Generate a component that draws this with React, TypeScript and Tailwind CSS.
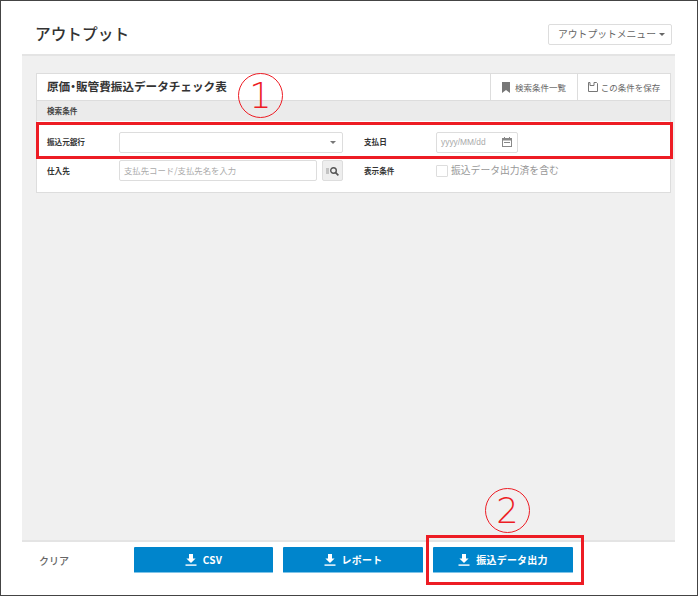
const font = { fontFamily: '"Noto Sans CJK JP", "Liberation Sans", sans-serif' };
const numeral = { fontFamily: '"DejaVu Sans", sans-serif' };

function DownloadIcon() {
  return (
    <svg width="12" height="12" viewBox="0 0 12 12" fill="currentColor" className="shrink-0">
      <path d="M4 0h4v4.5h2.6L6 9 1.4 4.5H4z" />
      <rect x="0.5" y="10.4" width="11" height="1.4" />
    </svg>
  );
}

function ActionButton({ label, w }: { label: string; w: string }) {
  return (
    <button className={`${w} h-[26px] flex items-center justify-center gap-[6px] bg-[#0085cc] rounded-[1px] border-b border-[#7fc4e8] text-white text-[10px] font-bold tracking-[0.2px]`}>
      <DownloadIcon />
      {label}
    </button>
  );
}

function FieldLabel({ children, w }: { children: string; w: string }) {
  return <div className={`${w} shrink-0 pl-[10px] text-[7.6px] font-bold text-[#333]`}>{children}</div>;
}

export default function App() {
  return (
    <div className="bg-white w-[700px] h-[598px]" style={font}>
      <div className="relative w-[698px] h-[596px] border border-[#444] flex flex-col">
        {/* Header */}
        <div className="h-[53px] shrink-0 flex items-center justify-between pl-[34px] pr-[25px] pt-[12px]">
          <h1 className="text-[15.7px] font-medium text-[#333]">アウトプット</h1>
          <button className="w-[124px] h-[21px] mt-[1px] flex items-center pl-[9px] gap-[3px] border border-[#ddd] rounded-[2px] text-[9.8px] text-[#666]">
            アウトプットメニュー
            <span className="w-0 h-0 border-x-[3px] border-x-transparent border-t-[3px] border-t-[#666]" />
          </button>
        </div>

        {/* Main area */}
        <div className="flex-1 ml-[21px] mr-[22px] bg-[#f0f0f0] border-y-2 border-[#e4e4e4] pt-[17px] pl-[14px] pr-[4px]">
          <div className="bg-white border border-[#ddd] h-[120px]">
            <div className="h-[26px] flex items-center justify-between">
              <div className="pl-[10px] text-[11.6px] font-bold text-[#333]">
                原価<span className="[font-feature-settings:'palt']">・</span>販管費振込データチェック表
              </div>
              <div className="flex h-full text-[8.5px] text-[#666]">
                <div className="w-[87px] border-l border-[#ddd] flex items-center justify-center gap-[5px]">
                  <svg width="8" height="11" viewBox="0 0 8 11" fill="#777"><path d="M0 0h8v11L4 8 0 11z" /></svg>
                  検索条件一覧
                </div>
                <div className="w-[93px] border-l border-[#ddd] flex items-center justify-center gap-[3px]">
                  <svg width="10" height="10" viewBox="0 0 10 10" fill="none" stroke="#777" strokeWidth="1"><path d="M.5.5h1.5v3h4v-3h2.5l1 1v8H.5z" /></svg>
                  この条件を保存
                </div>
              </div>
            </div>
            <div className="h-[21px] bg-[#ebebeb] border-t border-[#ddd] flex items-center pl-[10px] text-[7.6px] font-bold text-[#444]">検索条件</div>
            <div className="h-[38px] pt-[4px] flex items-center">
              <FieldLabel w="w-[82px]">振込元銀行</FieldLabel>
              <div className="w-[224px] h-[21px] border border-[#ddd] rounded-[2px] flex items-center justify-end pr-[6px]">
                <span className="w-0 h-0 border-x-[3px] border-x-transparent border-t-[3px] border-t-[#777]" />
              </div>
              <FieldLabel w="w-[84px] ml-[11px]">支払日</FieldLabel>
              <div className="w-[82px] h-[21px] -ml-[2px] border border-[#ddd] rounded-[2px] flex items-center justify-between pl-[4px] pr-[5px] text-[8.4px] text-[#aaa]">
                <span style={{ fontFamily: '"Liberation Sans", sans-serif' }}>yyyy/MM/dd</span>
                <svg width="10" height="10" viewBox="0 0 10 10" fill="#888"><path d="M2 0h1v1h4V0h1v1h2v9H0V1h2zM1 3.5V9h8V3.5z" /><rect x="2" y="5" width="6" height="1" /></svg>
              </div>
            </div>
            <div className="h-[23px] flex items-center">
              <FieldLabel w="w-[82px]">仕入先</FieldLabel>
              <div className="w-[198px] h-[21px] border border-[#ddd] rounded-[2px] flex items-center pl-[4px] text-[8.4px] text-[#aaa]">支払先コード/支払先名を入力</div>
              <div className="w-[21px] h-[21px] ml-[5px] bg-[#eee] border border-[#ddd] rounded-[2px] flex items-center justify-center">
                <svg width="13" height="10" viewBox="0 0 13 10" fill="none" stroke="#555"><path d="M0 3h3M0 5h3M0 7h3" stroke="#999" /><circle cx="7.5" cy="4.5" r="2.8" strokeWidth="1.4" /><path d="M9.6 6.6 12.4 9.4" strokeWidth="1.6" /></svg>
              </div>
              <FieldLabel w="w-[84px] ml-[11px]">表示条件</FieldLabel>
              <div className="-ml-[2px] flex items-center gap-[3px] text-[9.8px] text-[#999]">
                <span className="w-[12px] h-[12px] border border-[#ddd] rounded-[1px]" />
                振込データ出力済を含む
              </div>
            </div>
          </div>
        </div>

        {/* Footer */}
        <div className="h-[53px] shrink-0 flex items-start pt-[5px] ml-[38px] text-[10px]">
          <div className="w-[95px] h-[26px] flex items-center text-[#666] font-medium">クリア</div>
          <div className="flex gap-[10px]">
            <ActionButton label="CSV" w="w-[139px]" />
            <ActionButton label="レポート" w="w-[140px]" />
            <ActionButton label="振込データ出力" w="w-[140px]" />
          </div>
        </div>

        {/* Annotations */}
        <div className="absolute left-[35px] top-[121px] w-[637px] h-[37px] border-[3px] border-[#ed1c24]" />
        <div className="absolute left-[425px] top-[534px] w-[158px] h-[50px] border-[3px] border-[#ed1c24]" />
        <div className="absolute left-[237px] top-[72px] w-[45px] h-[45px] rounded-full border border-[#ed1c24] flex items-center justify-center pt-[2px] text-[35px] font-extralight text-[#ed1c24]" style={numeral}>1</div>
        <div className="absolute left-[484px] top-[487px] w-[45px] h-[45px] rounded-full border border-[#ed1c24] flex items-center justify-center pt-[2px] text-[35px] font-extralight text-[#ed1c24]" style={numeral}>2</div>
      </div>
    </div>
  );
}
